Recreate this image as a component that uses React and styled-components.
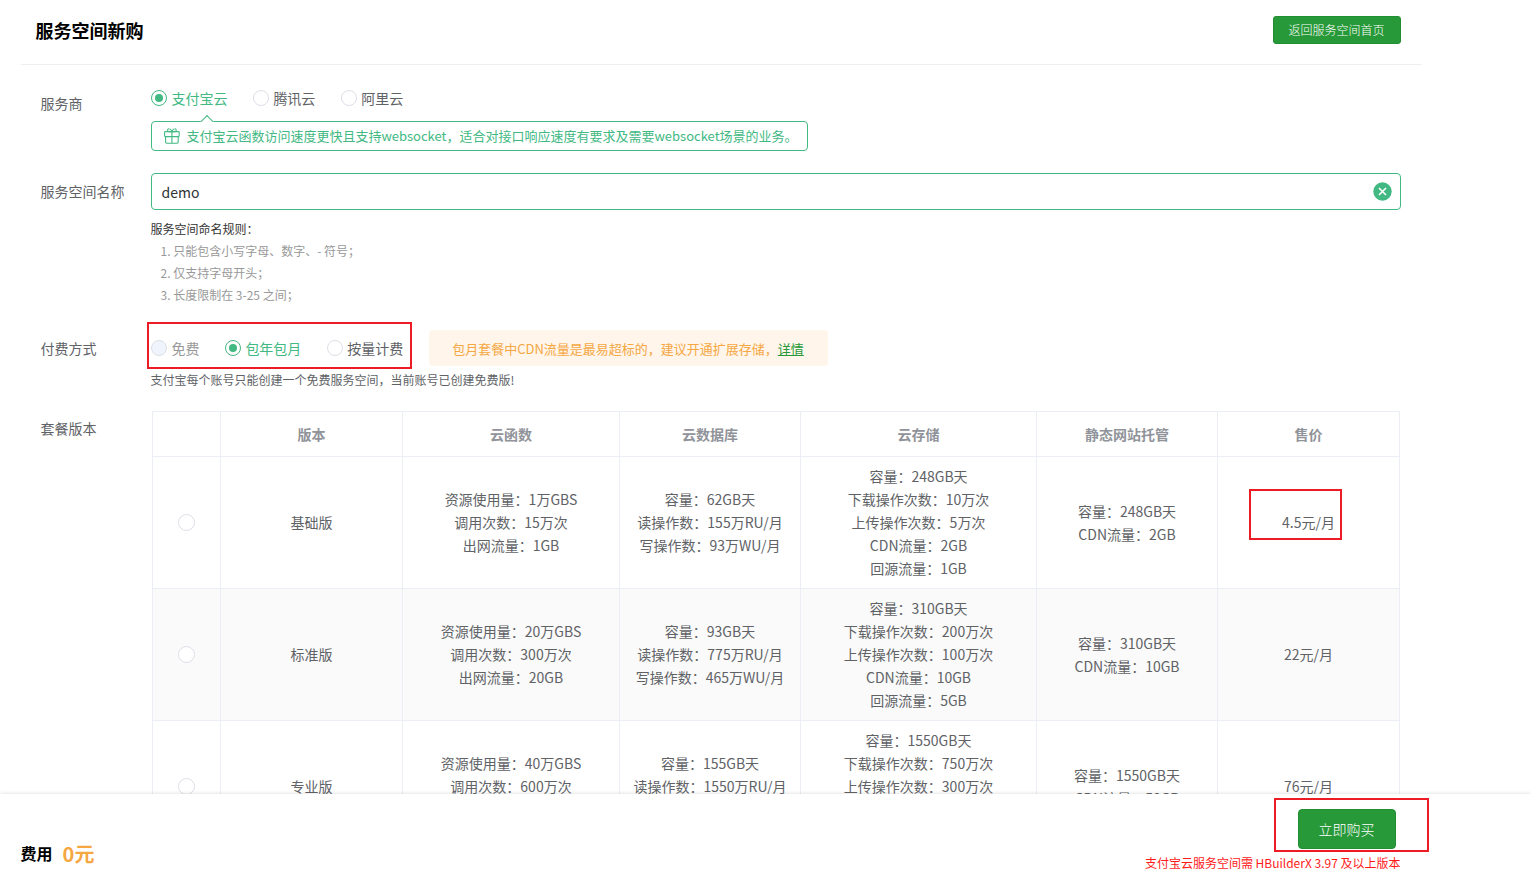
import React, { useState } from 'react';
import styled, { createGlobalStyle, css } from 'styled-components';

const GlobalStyle = createGlobalStyle`
  * {
    box-sizing: border-box;
  }

  body {
    margin: 0;
    background: #ffffff;
    color: #606266;
    font-family: 'Noto Sans CJK SC', 'Noto Sans', sans-serif;
    font-size: 14px;
    overflow: hidden;
  }
`;

const Page = styled.div`
  position: relative;
  height: 879px;
  overflow: hidden;
`;

const Header = styled.header`
  display: flex;
  justify-content: space-between;
  align-items: center;
  width: 1400px;
  height: 65px;
  margin-left: 21px;
  padding: 0 20px 5px 14.4px;
  border-bottom: 1px solid #eeeeee;
`;

const Title = styled.h1`
  margin: 0;
  font-size: 18px;
  line-height: 26px;
  font-weight: 700;
  color: #000000;
`;

const Button = styled.button`
  width: ${props => (props.$large ? 98 : 128)}px;
  height: ${props => (props.$large ? 40 : 28)}px;
  padding: 0 1px 0 0;
  border: 1px solid #218e33;
  border-radius: ${props => (props.$large ? 4 : 3)}px;
  background: #279939;
  color: #ffffff;
  font-family: inherit;
  font-size: ${props => (props.$large ? 14 : 12)}px;
  font-weight: 300;
  cursor: pointer;
`;

const Form = styled.main`
  width: 1401px;
  padding-left: 40px;
`;

const FormRow = styled.section`
  display: flex;
  height: ${props => props.$height}px;
`;

const Label = styled.div`
  flex: 0 0 111px;
  padding-top: ${props => props.$top}px;
  padding-left: 0.5px;
  line-height: 20px;
`;

const Content = styled.div`
  flex: 1;
  min-width: 0;
  padding-top: ${props => props.$top}px;
`;

const RadioGroup = styled.div`
  display: flex;
  align-items: center;
  gap: 25.6px;
  height: ${props => props.$height}px;
`;

const RadioLabel = styled.label`
  display: flex;
  align-items: center;
  gap: 4.4px;
  line-height: 20px;
  white-space: nowrap;
  cursor: pointer;
  color: ${props => (props.$checked ? '#42b983' : props.$disabled ? '#999999' : '#606266')};
`;

const Circle = styled.span`
  display: flex;
  align-items: center;
  justify-content: center;
  width: ${props => props.$size || 16}px;
  height: ${props => props.$size || 16}px;
  border: 1px solid #dcdfe6;
  border-radius: 50%;
  background: #ffffff;

  ${props => props.$disabled && css`
    background: #f0f4fc;
  `}

  ${props => props.$checked && css`
    border-color: #42b983;

    &::after {
      content: '';
      width: 8px;
      height: 8px;
      border-radius: 50%;
      background: #42b983;
    }
  `}
`;

const Tip = styled.div`
  position: relative;
  display: flex;
  align-items: center;
  gap: 6.4px;
  width: 657px;
  height: 30px;
  margin-top: 12px;
  padding-left: 12px;
  border: 1px solid #42b983;
  border-radius: 4px;
  color: #42b983;
  font-size: 13px;
  line-height: 20px;
  white-space: nowrap;

  &::before {
    content: '';
    position: absolute;
    left: 50px;
    top: -5px;
    width: 9px;
    height: 9px;
    border: solid #42b983;
    border-width: 1px 0 0 1px;
    background: #ffffff;
    transform: rotate(45deg);
    clip-path: polygon(-10% -10%, 110% -10%, -10% 110%);
  }
`;

const InputBox = styled.div`
  display: flex;
  align-items: center;
  height: 37px;
  padding: 0 8px 0 9.6px;
  border: 1px solid #42b983;
  border-radius: 4px;
`;

const Input = styled.input`
  flex: 1;
  padding: 1px 0 0;
  border: none;
  outline: none;
  background: transparent;
  color: #303133;
  font-family: inherit;
  font-size: 14px;
  line-height: 22px;
`;

const ClearButton = styled.button`
  display: flex;
  padding: 0;
  border: none;
  background: none;
  cursor: pointer;
`;

const Rules = styled.div`
  margin-top: 8px;
  margin-left: -0.5px;
  font-size: 12px;
  line-height: 22px;
  color: #333333;
`;

const Rule = styled.div`
  padding-left: 10px;
  color: #999999;
`;

const Notice = styled.div`
  width: 399px;
  height: 36px;
  margin-left: -0.4px;
  padding-left: 23.6px;
  border-radius: 4px;
  background: #fff5eb;
  color: #f5a742;
  font-size: 13px;
  line-height: 37px;
  white-space: nowrap;

  a {
    color: #279939;
    text-decoration: underline;
  }
`;

const Hint = styled.div`
  margin-top: 4px;
  margin-left: -0.5px;
  font-size: 12px;
  line-height: 20px;
`;

const Table = styled.div`
  width: 1248px;
  margin-left: 1px;
  border-top: 1px solid #ebeef5;
  border-left: 1px solid #ebeef5;
`;

const TableRow = styled.div`
  display: grid;
  grid-template-columns: 68px 182px 217px 181px 236px 181px 182px;
  height: ${props => (props.$head ? 45 : 132)}px;
  background: ${props => (props.$striped ? '#fafafa' : '#ffffff')};
  color: ${props => (props.$head ? '#909399' : '#606266')};
  font-weight: ${props => (props.$head ? 700 : 400)};
`;

const Cell = styled.div`
  display: flex;
  flex-direction: column;
  align-items: center;
  justify-content: center;
  border-right: 1px solid #ebeef5;
  border-bottom: 1px solid #ebeef5;
  line-height: 23px;
  white-space: nowrap;
`;

const Footer = styled.footer`
  position: absolute;
  left: 0;
  right: 0;
  bottom: 0;
  display: flex;
  justify-content: space-between;
  height: 85px;
  padding: 15px 130.5px 0 20.6px;
  background: #ffffff;
  box-shadow: 0 0 4px rgba(0, 0, 0, 0.16);
`;

const Cost = styled.div`
  display: flex;
  align-items: center;
  gap: 10px;
  height: 30px;
  margin-top: 29px;
  font-size: 16px;
  font-weight: 700;
  color: #000000;
`;

const Price = styled.span`
  font-size: 20px;
  color: #f5a742;
`;

const Purchase = styled.div`
  display: flex;
  flex-direction: column;
  align-items: flex-end;

  ${Button} {
    margin-right: 4.5px;
  }
`;

const Warning = styled.div`
  margin-top: 4px;
  font-size: 12px;
  line-height: 20px;
  color: #ff1a1a;
`;

// red frames drawn over the page
const Mark = styled.div`
  position: absolute;
  left: ${props => props.$x}px;
  top: ${props => props.$y}px;
  width: ${props => props.$w}px;
  height: ${props => props.$h}px;
  border: 2px solid #ed1c24;
  pointer-events: none;
`;

const columns = ['', '版本', '云函数', '云数据库', '云存储', '静态网站托管', '售价'];

const plans = [
  {
    name: '基础版',
    func: ['资源使用量：1万GBS', '调用次数：15万次', '出网流量：1GB'],
    db: ['容量：62GB天', '读操作数：155万RU/月', '写操作数：93万WU/月'],
    storage: ['容量：248GB天', '下载操作次数：10万次', '上传操作次数：5万次', 'CDN流量：2GB', '回源流量：1GB'],
    hosting: ['容量：248GB天', 'CDN流量：2GB'],
    price: '4.5元/月',
  },
  {
    name: '标准版',
    func: ['资源使用量：20万GBS', '调用次数：300万次', '出网流量：20GB'],
    db: ['容量：93GB天', '读操作数：775万RU/月', '写操作数：465万WU/月'],
    storage: ['容量：310GB天', '下载操作次数：200万次', '上传操作次数：100万次', 'CDN流量：10GB', '回源流量：5GB'],
    hosting: ['容量：310GB天', 'CDN流量：10GB'],
    price: '22元/月',
  },
  {
    name: '专业版',
    func: ['资源使用量：40万GBS', '调用次数：600万次', '出网流量：50GB'],
    db: ['容量：155GB天', '读操作数：1550万RU/月', '写操作数：930万WU/月'],
    storage: ['容量：1550GB天', '下载操作次数：750万次', '上传操作次数：300万次', 'CDN流量：50GB', '回源流量：10GB'],
    hosting: ['容量：1550GB天', 'CDN流量：50GB'],
    price: '76元/月',
  },
];

const GiftIcon = () => (
  <svg width="16" height="16" viewBox="0 0 16 16" fill="none" stroke="#42b983" strokeWidth="1.1">
    <rect x="0.6" y="3.6" width="14.6" height="5" rx="0.8" />
    <path d="M1.6 8.6v5.5a1.1 1.1 0 0 0 1.1 1.1h10.4a1.1 1.1 0 0 0 1.1-1.1V8.6M7.9 3.6v11.6" />
    <path d="M7.9 3.6H4.8a1.4 1.4 0 0 1 .3-2.8C6.8.8 7.9 3.6 7.9 3.6S9 .8 10.7.8a1.4 1.4 0 0 1 .3 2.8H7.9" />
  </svg>
);

const ClearIcon = () => (
  <svg width="19" height="19" viewBox="0 0 19 19">
    <circle cx="9.5" cy="9.5" r="9.2" fill="#42b983" />
    <path d="M6 6l7 7M13 6l-7 7" stroke="#ffffff" strokeWidth="1.6" />
  </svg>
);

const Radio = ({ text, checked, disabled, onSelect }) => (
  <RadioLabel $checked={checked} $disabled={disabled} onClick={disabled ? undefined : onSelect}>
    <Circle $checked={checked} $disabled={disabled} />
    {text}
  </RadioLabel>
);

const Lines = ({ items }) => (
  <Cell>
    {items.map(item => <div key={item}>{item}</div>)}
  </Cell>
);

export default function App() {
  const [provider, setProvider] = useState('支付宝云');
  const [payment, setPayment] = useState('包年包月');
  const [name, setName] = useState('demo');

  return (
    <Page>
      <GlobalStyle />
      <Header>
        <Title>服务空间新购</Title>
        <Button>返回服务空间首页</Button>
      </Header>

      <Form>
        <FormRow $height={108}>
          <Label $top={28}>服务商</Label>
          <Content $top={22}>
            <RadioGroup $height={22}>
              {['支付宝云', '腾讯云', '阿里云'].map(item => (
                <Radio key={item} text={item} checked={provider === item} onSelect={() => setProvider(item)} />
              ))}
            </RadioGroup>
            <Tip>
              <GiftIcon />
              支付宝云函数访问速度更快且支持websocket，适合对接口响应速度有要求及需要websocket场景的业务。
            </Tip>
          </Content>
        </FormRow>

        <FormRow $height={157}>
          <Label $top={8}>服务空间名称</Label>
          <Content $top={0}>
            <InputBox>
              <Input value={name} onChange={e => setName(e.target.value)} />
              <ClearButton onClick={() => setName('')}>
                <ClearIcon />
              </ClearButton>
            </InputBox>
            <Rules>
              服务空间命名规则：
              <Rule>1. 只能包含小写字母、数字、- 符号；</Rule>
              <Rule>2. 仅支持字母开头；</Rule>
              <Rule>3. 长度限制在 3-25 之间；</Rule>
            </Rules>
          </Content>
        </FormRow>

        <FormRow $height={81}>
          <Label $top={8}>付费方式</Label>
          <Content $top={0}>
            <RadioGroup $height={36}>
              <Radio text="免费" disabled />
              {['包年包月', '按量计费'].map(item => (
                <Radio key={item} text={item} checked={payment === item} onSelect={() => setPayment(item)} />
              ))}
              <Notice>
                包月套餐中CDN流量是最易超标的，建议开通扩展存储，<a>详情</a>
              </Notice>
            </RadioGroup>
            <Hint>支付宝每个账号只能创建一个免费服务空间，当前账号已创建免费版!</Hint>
          </Content>
        </FormRow>

        <FormRow $height={442}>
          <Label $top={7}>套餐版本</Label>
          <Content $top={0}>
            <Table>
              <TableRow $head>
                {columns.map(column => <Cell key={column}>{column}</Cell>)}
              </TableRow>
              {plans.map((plan, index) => (
                <TableRow key={plan.name} $striped={index % 2 === 1}>
                  <Cell><Circle $size={17} /></Cell>
                  <Cell>{plan.name}</Cell>
                  <Lines items={plan.func} />
                  <Lines items={plan.db} />
                  <Lines items={plan.storage} />
                  <Lines items={plan.hosting} />
                  <Cell>{plan.price}</Cell>
                </TableRow>
              ))}
            </Table>
          </Content>
        </FormRow>
      </Form>

      <Footer>
        <Cost>
          费用
          <Price>0元</Price>
        </Cost>
        <Purchase>
          <Button $large>立即购买</Button>
          <Warning>支付宝云服务空间需 HBuilderX 3.97 及以上版本</Warning>
        </Purchase>
      </Footer>

      <Mark $x={147} $y={322} $w={265} $h={47} />
      <Mark $x={1249} $y={489} $w={93} $h={51} />
      <Mark $x={1274} $y={798} $w={155} $h={54} />
    </Page>
  );
}
